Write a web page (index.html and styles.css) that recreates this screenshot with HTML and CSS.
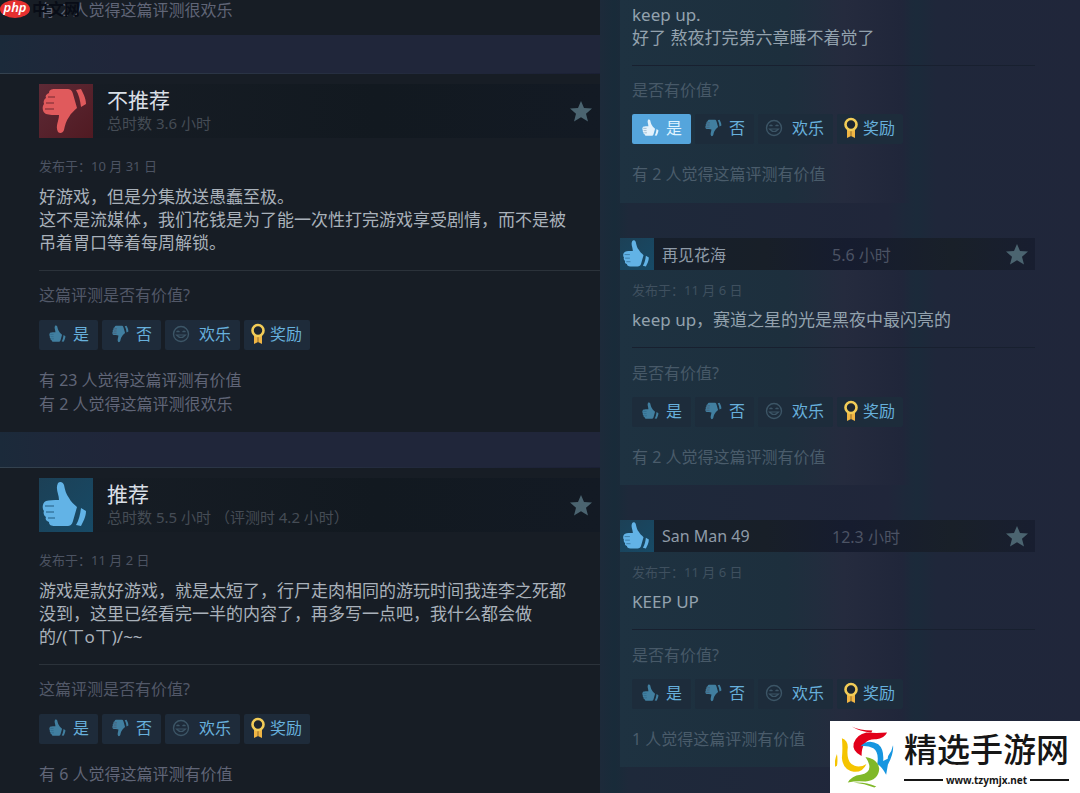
FILE: index.html
```html
<!DOCTYPE html>
<html lang="zh-CN">
<head>
<meta charset="utf-8">
<title>评测</title>
<link rel="stylesheet" href="styles.css">
</head>
<body>
<svg class="sprite" aria-hidden="true">
  <symbol id="up" viewBox="0 0 54 54">
    <path fill="currentColor" d="M19 5c2-2 5-1 6 2 1 5 2 9 5 13 2 4 5 6 8 9l-4 14c-1 4-3 5-6 5H16c-4 0-6-1-6-4-3-1-4-3-3-5-2-1-3-4-2-6-2-2-2-8 2-10 3-1 8-1 13-1 0-6-4-11-1-17zM42 30l5 3c0 6-3 11-5 15l-5-1c3-5 4-10 5-17z"/>
    <path fill="none" stroke="#174a6b" stroke-opacity=".55" stroke-width="1.5" d="M6 28h9M7 34h8M9 40h7"/>
  </symbol>
  <symbol id="down" viewBox="0 0 54 54">
    <g transform="matrix(1 0 0 -1 0 53)">
      <path fill="currentColor" d="M19 5c2-2 5-1 6 2 1 5 2 9 5 13 2 4 5 6 8 9l-4 14c-1 4-3 5-6 5H16c-4 0-6-1-6-4-3-1-4-3-3-5-2-1-3-4-2-6-2-2-2-8 2-10 3-1 8-1 13-1 0-6-4-11-1-17zM42 30l5 3c0 6-3 11-5 15l-5-1c3-5 4-10 5-17z"/>
      <path fill="none" stroke="#5b1d28" stroke-opacity=".55" stroke-width="1.5" d="M6 28h9M7 34h8M9 40h7"/>
    </g>
  </symbol>
  <symbol id="smile" viewBox="0 0 18 18">
    <circle cx="9" cy="9" r="7.5" fill="none" stroke="currentColor" stroke-width="1.4"/>
    <path fill="none" stroke="currentColor" stroke-width="1.2" d="M4.500 7q1.500-1.500 3 0M10.500 7q1.500-1.500 3 0M4.500 10q4.500 5 9 0z"/>
  </symbol>
  <symbol id="medal" viewBox="0 0 16 22">
    <path fill="#f0b544" d="M4 12h8v9l-4-2-4 2z"/>
    <path stroke="#8c6a2c" d="M8 14v5"/>
    <circle cx="8" cy="7.500" r="5.500" fill="#1c2530" stroke="#f2cc57" stroke-width="2.600"/>
  </symbol>
  <symbol id="star" viewBox="0 0 22 22">
    <path fill="currentColor" d="M11 1l3 7 8 .600-6 5.200 2 7.700-7-4.200-7 4.200 2-7.700L0 8.600 8 8z"/>
  </symbol>
</svg>

<div class="page">
  <main class="main-col">
    <article class="review tail">
      <p class="counts">有 2 人觉得这篇评测很欢乐</p>
    </article>

    <article class="review">
      <header class="head">
        <span class="thumb bad"><svg><use href="#down"/></svg></span>
        <div class="titles"><h2>不推荐</h2><p>总时数 3.6 小时</p></div>
        <svg class="star"><use href="#star"/></svg>
      </header>
      <p class="date">发布于：10 月 31 日</p>
      <p class="text">好游戏，但是分集放送愚蠢至极。<br>这不是流媒体，我们花钱是为了能一次性打完游戏享受剧情，而不是被<br>吊着胃口等着每周解锁。</p>
      <p class="ask">这篇评测是否有价值?</p>
      <div class="votes">
        <button><svg><use href="#up"/></svg>是</button>
        <button><svg><use href="#down"/></svg>否</button>
        <button class="fun"><svg><use href="#smile"/></svg>欢乐</button>
        <button class="award"><svg><use href="#medal"/></svg>奖励</button>
      </div>
      <p class="counts">有 23 人觉得这篇评测有价值<br>有 2 人觉得这篇评测很欢乐</p>
    </article>

    <article class="review">
      <header class="head">
        <span class="thumb"><svg><use href="#up"/></svg></span>
        <div class="titles"><h2>推荐</h2><p>总时数 5.5 小时 （评测时 4.2 小时）</p></div>
        <svg class="star"><use href="#star"/></svg>
      </header>
      <p class="date">发布于：11 月 2 日</p>
      <p class="text">游戏是款好游戏，就是太短了，行尸走肉相同的游玩时间我连李之死都<br>没到，这里已经看完一半的内容了，再多写一点吧，我什么都会做<br>的/(ㄒoㄒ)/~~</p>
      <p class="ask">这篇评测是否有价值?</p>
      <div class="votes">
        <button><svg><use href="#up"/></svg>是</button>
        <button><svg><use href="#down"/></svg>否</button>
        <button class="fun"><svg><use href="#smile"/></svg>欢乐</button>
        <button class="award"><svg><use href="#medal"/></svg>奖励</button>
      </div>
      <p class="counts">有 6 人觉得这篇评测有价值</p>
    </article>
  </main>

  <aside class="side-col">
    <article class="brief">
      <div class="inner tail-inner">
        <p class="text">keep up.<br>好了 熬夜打完第六章睡不着觉了</p>
        <p class="ask">是否有价值?</p>
        <div class="votes">
          <button class="on"><svg><use href="#up"/></svg>是</button>
          <button><svg><use href="#down"/></svg>否</button>
          <button class="fun"><svg><use href="#smile"/></svg>欢乐</button>
          <button class="award"><svg><use href="#medal"/></svg>奖励</button>
        </div>
        <p class="counts">有 2 人觉得这篇评测有价值</p>
      </div>
    </article>

    <article class="brief">
      <header class="bar">
        <span class="thumb"><svg><use href="#up"/></svg></span>
        <a class="name">再见花海</a><span class="hours">5.6 小时</span>
        <svg class="star"><use href="#star"/></svg>
      </header>
      <div class="inner">
        <p class="date">发布于：11 月 6 日</p>
        <p class="text">keep up，赛道之星的光是黑夜中最闪亮的</p>
        <p class="ask">是否有价值?</p>
        <div class="votes">
          <button><svg><use href="#up"/></svg>是</button>
          <button><svg><use href="#down"/></svg>否</button>
          <button class="fun"><svg><use href="#smile"/></svg>欢乐</button>
          <button class="award"><svg><use href="#medal"/></svg>奖励</button>
        </div>
        <p class="counts">有 2 人觉得这篇评测有价值</p>
      </div>
    </article>

    <article class="brief">
      <header class="bar">
        <span class="thumb"><svg><use href="#up"/></svg></span>
        <a class="name">San Man 49</a><span class="hours">12.3 小时</span>
        <svg class="star"><use href="#star"/></svg>
      </header>
      <div class="inner">
        <p class="date">发布于：11 月 6 日</p>
        <p class="text">KEEP UP</p>
        <p class="ask">是否有价值?</p>
        <div class="votes">
          <button><svg><use href="#up"/></svg>是</button>
          <button><svg><use href="#down"/></svg>否</button>
          <button class="fun"><svg><use href="#smile"/></svg>欢乐</button>
          <button class="award"><svg><use href="#medal"/></svg>奖励</button>
        </div>
        <p class="counts">1 人觉得这篇评测有价值</p>
      </div>
    </article>
  </aside>
</div>

<div class="php-mark"><span class="php">php</span><span class="cn">中文网</span></div>

<div class="site-mark">
  <svg class="swirl" viewBox="0 0 60 62">
    <path fill="#e2001a" d="M17 0q8 4 21 4l-1 2q-12-1-20-6zM53 6q-3 6-11 7-15-1-15 17-10-5-8-13 3-9 13-11 10 1 21 0z"/>
    <path fill="#1696e0" d="M26 20q8-8 18-2 6 5 5 17l6-3-3 17q-4-8-9-11 2-12-4-16-6-3-13-2zM59 19q1 9-6 21 0-6 1-10 4-5 5-11z"/>
    <path fill="#f5c400" d="M7 12q6 2 6 9-2 16 7 19 6 2 12-2-4 9-13 8-11-2-12-14 1-10 0-20zM2 28q-3 7-2 13l2-1q1-6 0-12z"/>
    <path fill="#80b828" d="M31 31q13 2 14 12-1 12-14 13-9-1-18 1 4-7 13-8 15-3 5-18zM19 57q12-1 23 4l-2 1q-10-4-21-5z"/>
  </svg>
  <div class="words">
    <strong>精选手游网</strong>
    <span class="url">www.tzymjx.net</span>
  </div>
</div>
</body>
</html>
```
FILE: styles.css
```css
* { box-sizing: border-box; }

body {
  margin: 0;
  height: 100vh;
  overflow: hidden;
  position: relative;
  background: #20263a;
  color: #a9b1ba;
  font-family: "Noto Sans", "Noto Sans CJK SC", sans-serif;
  font-size: 16px;
}

h2, p { margin: 0; font-weight: 400; }

.sprite { position: absolute; width: 0; height: 0; }

.page {
  display: grid;
  grid-template-columns: 5fr 4fr;
  height: 100%;
}

.main-col {
  display: flex;
  flex-direction: column;
  gap: 35px;
  background: linear-gradient(90deg, #1b2a3a, #1e283a 8%, #20263a 20%);
}

.review {
  flex: none;
  padding: 10px 0 16px 39px;
  border-top: 1px solid #2b3a4a;
  border-image: linear-gradient(90deg, #34424f, #273042 50%, #1b2035) 1;
  background: #171d25;
}

.tail {
  margin-bottom: 3px;
  padding-top: 0;
  padding-bottom: 15px;
  border: 0;
}

.tail .counts { margin: 0; line-height: 20px; }

.head {
  display: flex;
  align-items: center;
  height: 54px;
  padding-right: 8px;
  background: linear-gradient(90deg, #171d25, #121920 60%, #131a24);
}

.thumb {
  flex: none;
  width: 54px;
  height: 54px;
  background: linear-gradient(135deg, #1c4056, #174a66);
  color: #62b3e6;
}

.thumb svg { display: block; width: 100%; height: 100%; }

.bad { background: linear-gradient(135deg, #5d2a36, #501a22); color: #e05a5c; }

.titles { flex: 1; margin-left: 14px; padding-bottom: 2px; }

.titles h2 { color: #d9dfe6; font-size: 21px; line-height: 26px; }

.titles p { color: #454c55; font-size: 15px; line-height: 20px; }

.star { width: 22px; height: 22px; color: #4b6470; }

.date { margin-top: 19px; color: #4c5362; font-size: 13px; line-height: 18px; }

.text {
  margin-top: 10px;
  padding-bottom: 16px;
  border-bottom: 1px solid #2b323a;
  font-size: 17px;
  line-height: 23px;
}

.ask { margin-top: 12px; color: #525868; line-height: 24px; }

.votes { display: flex; gap: 4px; margin-top: 13px; }

.votes button {
  display: flex;
  align-items: center;
  gap: 5px;
  height: 30px;
  padding: 0 9px 2px;
  border: 0;
  border-radius: 2px;
  background: #1e2b3a;
  color: #67b0dc;
  font: inherit;
  line-height: 24px;
}

.votes svg { width: 20px; height: 22px; color: #417fa0; }

.votes .fun { gap: 9px; padding-left: 7px; }

.votes .fun svg { width: 18px; height: 18px; color: #3c5566; }

.votes .award { gap: 4px; padding-right: 8px; padding-left: 6px; }

.votes .award svg { width: 16px; }

.counts { margin-top: 18px; color: #606577; line-height: 24px; }

.side-col {
  display: flex;
  flex-direction: column;
  gap: 35px;
  padding: 0 45px 0 20px;
  background: linear-gradient(90deg, #1d2a3a, #182b39 3%, #1e293a 6%, #20263a 60%, #1b2a3a 66%, #1f273a 70%, #20263a);
}

.brief {
  flex: none;
  background: linear-gradient(90deg, #1e3241, #1d2f3d 40%, #252b3e 54%, #20263a 68%, transparent 70%);
}

.bar {
  display: flex;
  align-items: center;
  height: 32px;
  padding-right: 7px;
  background: linear-gradient(90deg, #161f2c, #181f28 35%, #161c2f 55%, #192029 80%, #181e30);
}

.bar .thumb { width: 34px; height: 32px; }

.name { flex: 0 0 170px; margin-left: 8px; color: #8f9ba8; }

.hours { flex: 1; color: #4c5364; }

.inner { padding: 11px 0 16px 12px; }

.tail-inner { padding-top: 3px; padding-bottom: 17px; }

.inner .date { margin: 0; color: #3f505f; }

.inner .text { margin-top: 9px; border-color: #18202f; color: #93a2ae; }

.tail-inner .text { margin: 0; }

.inner .ask { margin-top: 13px; color: #475968; }

.tail-inner .ask { margin-top: 12px; }

.inner .votes { margin-top: 12px; }

.inner .votes button { background: #1d2c3b; }

.inner .votes .on { background: #55a5dc; color: #dff2ff; }

.inner .votes .on svg { color: #e4f2fc; }

.inner .counts { color: #4a5c6b; }

.php-mark {
  position: absolute;
  top: 0;
  left: 0;
  display: flex;
  align-items: center;
  gap: 2px;
  height: 18px;
}

.php {
  width: 30px;
  height: 18px;
  border-radius: 50%;
  background: #e6302f;
  color: #fff;
  font-size: 13px;
  font-style: italic;
  font-weight: 600;
  line-height: 15px;
  text-align: center;
}

.cn { color: #080c16; font-size: 16px; font-weight: 700; line-height: 18px; }

.site-mark {
  position: absolute;
  right: 0;
  bottom: 0;
  display: flex;
  gap: 10px;
  padding: 5px 11px 5px 5px;
  background: #fff;
  color: #161616;
}

.swirl { width: 59px; height: 62px; }

.words { display: flex; flex-direction: column; }

.words strong { font-size: 33px; font-weight: 500; line-height: 48px; }

.url {
  display: flex;
  align-items: center;
  gap: 3px;
  font-size: 10px;
  font-weight: 700;
  line-height: 12px;
}

.url::before, .url::after { content: ""; flex: 1; height: 2px; background: #161616; }
```
